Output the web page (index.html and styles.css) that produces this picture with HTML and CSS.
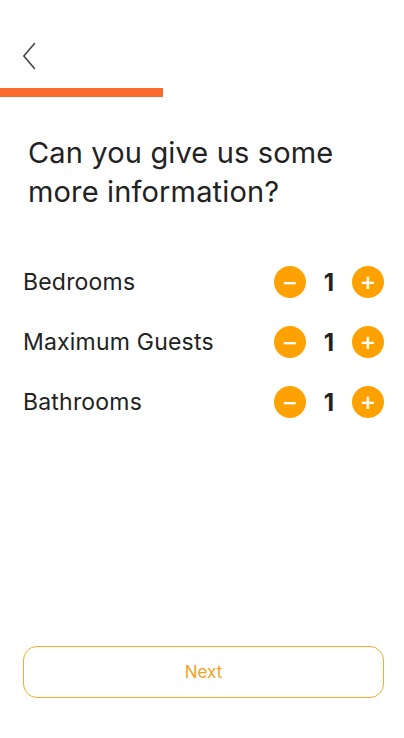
FILE: index.html
```html
<!DOCTYPE html>
<html lang="en">
<head>
<meta charset="UTF-8" />
<meta name="viewport" content="width=device-width, initial-scale=1" />
<title>Listing details</title>
<link rel="stylesheet" href="styles.css">
</head>
<body>

<div class="screen">
  <div class="top-bar">
    <button type="button" class="back-btn" aria-label="Back">
      <svg width="14" height="28" viewBox="0 0 14 28" fill="none">
        <path d="M12.5 1.5 L1.8 14 L12.5 26.5" stroke="#444" stroke-width="1.6" stroke-linecap="round" stroke-linejoin="round"/>
      </svg>
    </button>
  </div>

  <div class="progress">
    <div class="progress-fill"></div>
  </div>

  <h1 class="question">Can you give us some more information?</h1>

  <div class="counters">
    <div class="counter-row">
      <span class="counter-label">Bedrooms</span>
      <div class="stepper">
        <button type="button" class="step-btn">&minus;</button>
        <span class="step-value">1</span>
        <button type="button" class="step-btn">+</button>
      </div>
    </div>
    <div class="counter-row">
      <span class="counter-label">Maximum Guests</span>
      <div class="stepper">
        <button type="button" class="step-btn">&minus;</button>
        <span class="step-value">1</span>
        <button type="button" class="step-btn">+</button>
      </div>
    </div>
    <div class="counter-row">
      <span class="counter-label">Bathrooms</span>
      <div class="stepper">
        <button type="button" class="step-btn">&minus;</button>
        <span class="step-value">1</span>
        <button type="button" class="step-btn">+</button>
      </div>
    </div>
  </div>

  <div class="footer">
    <button type="button" class="next-btn">Next</button>
  </div>
</div>

</body>
</html>
```

FILE: styles.css
```css
/* Base */
* {
  box-sizing: border-box;
}
body {
  margin: 0;
  background: #fff;
  font-family: Inter, 'Noto Sans', sans-serif;
  color: #222;
}

.screen {
  min-height: 738px;
  display: flex;
  flex-direction: column;
}

/* Back arrow */
.top-bar {
  height: 88px;
  padding: 42px 0 0 22px;
}
.back-btn {
  background: none;
  border: none;
  padding: 0;
  display: block;
  cursor: pointer;
}

/* Progress */
.progress {
  height: 9px;
}
.progress-fill {
  width: 163px;
  height: 100%;
  background: #fb6a2c;
}

.question {
  font-size: 29px;
  font-weight: 400;
  line-height: 39px;
  margin: 36px 40px 0 28px;
  color: #222;
  letter-spacing: 0.15px;
}

/* Rows with steppers */
.counters {
  margin-top: 55px;
  padding: 0 20px 0 23px;
  display: flex;
  flex-direction: column;
  gap: 28px;
}
.counter-row {
  display: flex;
  align-items: center;
  justify-content: space-between;
  height: 32px;
}
.counter-label {
  font-size: 23px;
  color: #222;
  letter-spacing: 0.2px;
}
.stepper {
  display: flex;
  align-items: center;
}
.step-btn {
  width: 32px;
  height: 32px;
  border-radius: 50%;
  border: none;
  background: #ffa100;
  color: #fff;
  font-family: 'DejaVu Sans', sans-serif;
  font-size: 19px;
  font-weight: 700;
  line-height: 32px;
  padding: 0;
  cursor: pointer;
}
.step-value {
  width: 46px;
  text-align: center;
  font-size: 24px;
  font-weight: 700;
  color: #222;
}

/* Next button */
.footer {
  margin-top: auto;
  padding: 0 20px 40px 23px;
}
.next-btn {
  width: 100%;
  height: 52px;
  background: #fff;
  border: 1px solid #f6ac2a;
  border-radius: 14px;
  color: #f5a21c;
  font-family: Inter, 'Noto Sans', sans-serif;
  font-size: 17px;
  cursor: pointer;
}
```
